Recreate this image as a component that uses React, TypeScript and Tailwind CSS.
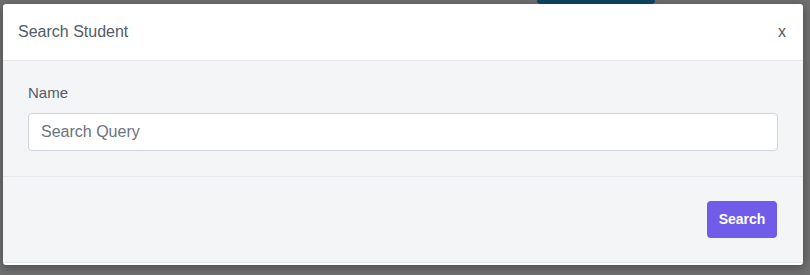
import { useState } from "react";

export default function App() {
  const [query, setQuery] = useState("");

  return (
    <div className="relative h-[275px] w-[810px] overflow-hidden bg-[#6f6f6f] font-['Liberation_Sans',Arial,sans-serif]">
      {/* page behind the overlay */}
      <div className="flex h-[4px] justify-start pl-[537px]">
        <div className="h-[4px] w-[118px] rounded-b-md bg-[#0e4468]" />
      </div>

      {/* modal */}
      <div className="absolute left-[3px] top-[4px] w-[800px] overflow-hidden rounded-[3px] bg-white pb-[2px] shadow-[0_2px_10px_rgba(0,0,0,0.35)]">
        <div className="flex h-[57px] items-center justify-between border-b border-[#e5e7eb] pl-[15px] pr-[17px]">
          <h2 className="text-[16px] text-[#525b68]">Search Student</h2>
          <button className="pb-[1px] text-[16px] leading-none text-[#525b68]">x</button>
        </div>

        <div className="bg-[#f4f5f7]">
          <div className="border-b border-[#e5e7eb] px-[25px] pb-[25px] pt-[21px]">
            <label className="mb-[9px] block text-[15px] leading-[22px] text-[#525b68]">Name</label>
            <input
              value={query}
              onChange={(e) => setQuery(e.target.value)}
              placeholder="Search Query"
              className="h-[38px] w-full rounded-[4px] border border-[#d1d5db] bg-white px-[12px] text-[16px] text-[#374151] outline-none placeholder:text-[#6b7280]"
            />
          </div>

          <div className="flex justify-end border-b border-[#e5e7eb] px-[26px] py-[24px]">
            <button className="h-[37px] w-[70px] rounded-[4px] bg-[#6f5de9] text-[14px] font-semibold text-white">
              Search
            </button>
          </div>
        </div>
      </div>
    </div>
  );
}
